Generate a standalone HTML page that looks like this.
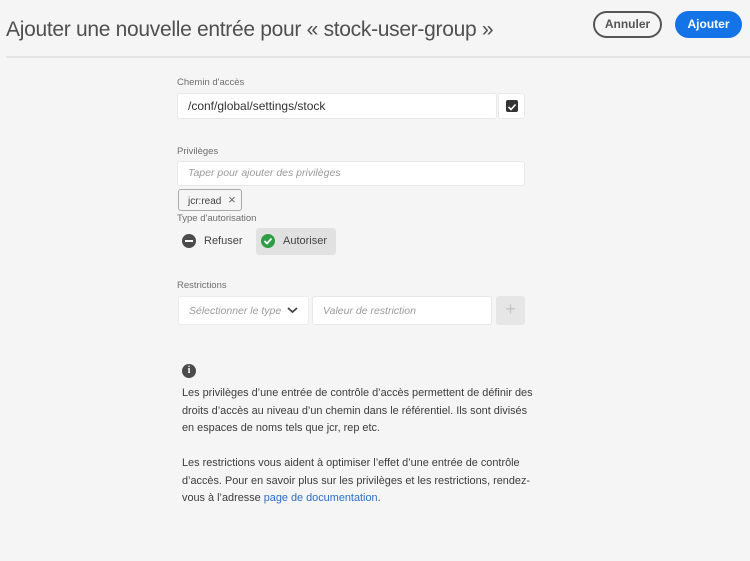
<!DOCTYPE html>
<html><head><meta charset="utf-8"><style>
*{box-sizing:border-box;margin:0;padding:0}
body{width:750px;height:561px;background:#f5f5f5;font-family:"Liberation Sans",sans-serif;color:#4b4b4b;position:relative;overflow:hidden}
.abs{position:absolute}
h1{position:absolute;left:6px;top:18px;font-size:21px;font-weight:normal;color:#505050;letter-spacing:-0.3px;white-space:nowrap}
.sep{position:absolute;left:6px;right:0;top:56px;height:2px;background:#e4e4e4}
.btn{position:absolute;top:11px;height:27px;border-radius:14px;font-size:12px;font-weight:bold;text-align:center;line-height:23px}
.lbl{position:absolute;left:177px;font-size:9.5px;color:#6e6e6e}
.inp{position:absolute;background:#fff;border:1px solid #e8e8e8;border-radius:3px;font-size:12px;padding-left:10px}
.ph{color:#9a9a9a;font-style:italic}
p{position:absolute;left:182px;font-size:10.9px;line-height:17.5px;color:#3c3c3c;white-space:nowrap}
a{color:#2a6fc9;text-decoration:none}
</style></head><body>
<h1>Ajouter une nouvelle entrée pour « stock-user-group »</h1>
<div class="btn" style="left:593px;width:69px;border:2px solid #555;color:#555">Annuler</div>
<div class="btn" style="left:675px;width:67px;background:#1473e6;color:#fff;line-height:27px">Ajouter</div>
<div class="sep"></div>

<div class="lbl" style="top:77px">Chemin d'accès</div>
<div class="inp" style="left:177px;top:93px;width:320px;height:26px;line-height:24px;color:#333;font-size:12px">/conf/global/settings/stock</div>
<div class="abs" style="left:498px;top:93px;width:27px;height:26px;background:#fff;border:1px solid #e8e8e8;border-radius:3px"></div>
<div class="abs" style="left:506px;top:100px;width:12px;height:12px;background:#333;border-radius:2px"><svg width="12" height="12"><path d="M2.5 6l2.5 2.5 4.5-5" stroke="#fff" stroke-width="1.6" fill="none"/></svg></div>

<div class="lbl" style="top:146px">Privilèges</div>
<div class="inp ph" style="left:177px;top:161px;width:348px;height:25px;line-height:23px;font-size:10.5px">Taper pour ajouter des privilèges</div>
<div class="abs" style="left:178px;top:189px;width:64px;height:22px;border:1px solid #aaa;border-radius:3px;font-size:10px;line-height:20px;padding-left:9px;color:#444">jcr:read <span style="margin-left:4px;color:#666;font-size:13px">×</span></div>
<div class="lbl" style="top:213px">Type d'autorisation</div>
<div class="abs" style="left:182px;top:234px;width:14px;height:14px;border-radius:50%;background:#4b4b4b"><div style="position:absolute;left:3px;top:6px;width:8px;height:2px;background:#fff"></div></div>
<div class="abs" style="left:204px;top:235px;font-size:11px;color:#444">Refuser</div>
<div class="abs" style="left:256px;top:228px;width:80px;height:27px;background:#e1e1e1;border-radius:3px"></div>
<div class="abs" style="left:261px;top:234px;width:14px;height:14px;border-radius:50%;background:#2d9d46"><svg width="14" height="14"><path d="M3.5 7l2.5 2.5 4.5-5" stroke="#fff" stroke-width="1.8" fill="none"/></svg></div>
<div class="abs" style="left:283px;top:235px;font-size:11px;color:#444">Autoriser</div>

<div class="lbl" style="top:280px">Restrictions</div>
<div class="inp ph" style="left:178px;top:296px;width:131px;height:29px;line-height:28px;font-size:10.5px;border-color:#ececec">Sélectionner le type</div>
<svg class="abs" style="left:287px;top:306px" width="11" height="8"><path d="M1 2l4.5 4 4.5-4" stroke="#444" stroke-width="1.8" fill="none"/></svg>
<div class="inp ph" style="left:312px;top:296px;width:180px;height:29px;line-height:28px;font-size:10.5px">Valeur de restriction</div>
<div class="abs" style="left:496px;top:296px;width:29px;height:29px;background:#e6e6e6;border-radius:3px;color:#c4c4c4;font-size:18px;text-align:center;line-height:27px">+</div>

<div class="abs" style="left:182px;top:364px;width:14px;height:14px;border-radius:50%;background:#4b4b4b;color:#fff;font-size:10px;font-weight:bold;text-align:center;line-height:14px;font-family:'Liberation Serif',serif">i</div>
<p style="top:385px">Les privilèges d’une entrée de contrôle d’accès permettent de définir des<br>droits d’accès au niveau d’un chemin dans le référentiel. Ils sont divisés<br>en espaces de noms tels que jcr, rep etc.</p>
<p style="top:455px">Les restrictions vous aident à optimiser l’effet d’une entrée de contrôle<br>d’accès. Pour en savoir plus sur les privilèges et les restrictions, rendez-<br>vous à l’adresse <a>page de documentation</a>.</p>
</body></html>
